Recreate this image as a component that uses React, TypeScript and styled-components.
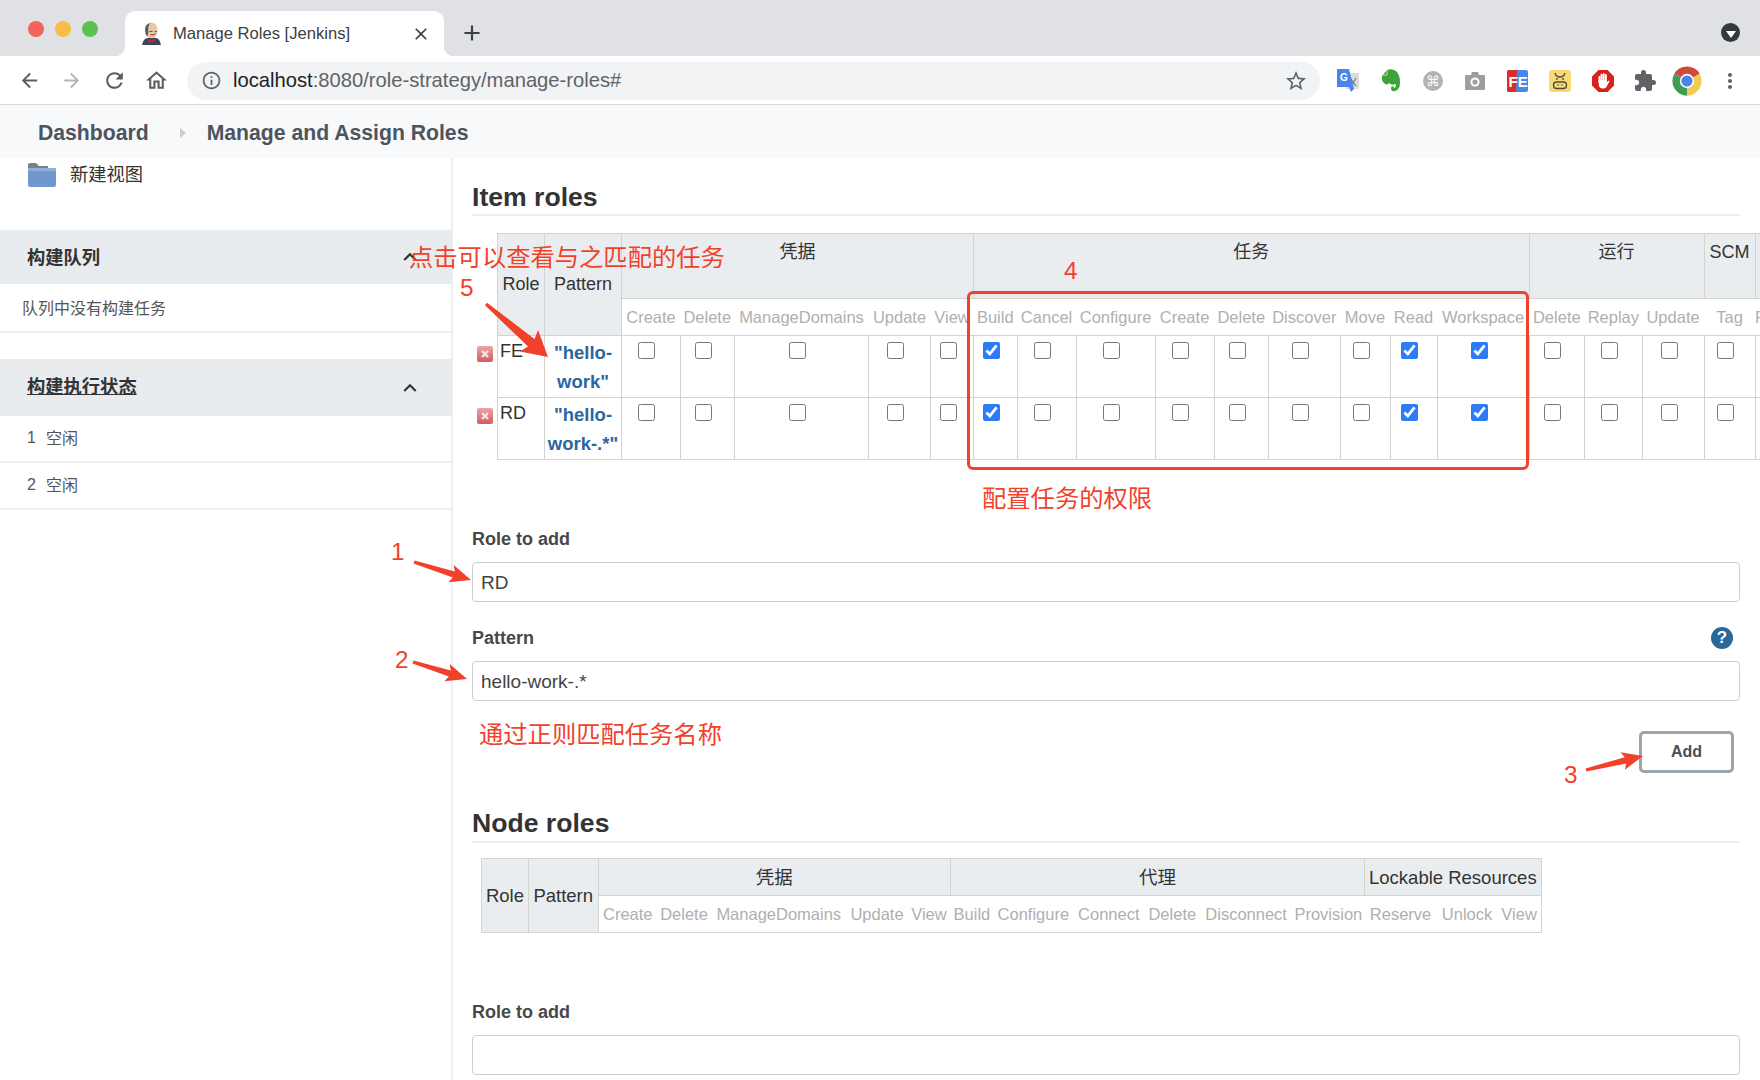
import styled, { createGlobalStyle } from "styled-components";
import {
    MdAdd,
    MdArrowBack,
    MdArrowForward,
    MdClose,
    MdExtension,
    MdInfoOutline,
    MdKeyboardArrowUp,
    MdMoreVert,
    MdOutlineHome,
    MdRefresh,
    MdStarBorder,
} from "react-icons/md";

const FONT = `"Liberation Sans", "Noto Sans CJK SC", sans-serif`;
const RED = "#f2412b";
const LINE = "#d3d3cf";

const GlobalStyle = createGlobalStyle`
    html, body {
        margin: 0;
        padding: 0;
        background: #fff;
        overflow: hidden;
    }
    * {
        box-sizing: border-box;
    }
`;

const Page = styled.div`
    position: relative;
    width: 1760px;
    height: 1080px;
    overflow: hidden;
    font-family: ${FONT};
    color: #333;
    background: #fff;
`;

// browser chrome
const TabStrip = styled.div`
    display: flex;
    align-items: flex-end;
    height: 56px;
    padding-right: 20px;
    background: #dfe1e5;
`;

const Lights = styled.div`
    display: flex;
    gap: 11px;
    align-self: flex-start;
    margin: 21px 0 0 28px;
`;

const Light = styled.span<{ $color: string }>`
    width: 16px;
    height: 16px;
    border-radius: 50%;
    background: ${(p) => p.$color};
`;

const Tab = styled.div`
    position: relative;
    display: flex;
    align-items: center;
    gap: 11px;
    width: 319px;
    height: 45px;
    margin-left: 27px;
    padding: 0 13px 0 16px;
    background: #fff;
    border-radius: 10px 10px 0 0;
    &::before,
    &::after {
        content: "";
        position: absolute;
        bottom: 0;
        width: 10px;
        height: 10px;
    }
    &::before {
        left: -10px;
        background: radial-gradient(circle at 0 0, transparent 10px, #fff 10.5px);
    }
    &::after {
        right: -10px;
        background: radial-gradient(circle at 100% 0, transparent 10px, #fff 10.5px);
    }
`;

const TabTitle = styled.span`
    flex: 1;
    font-size: 16.6px;
    color: #3c4043;
    white-space: nowrap;
`;

const NewTab = styled.div`
    display: flex;
    align-self: flex-start;
    margin: 20px 0 0 15px;
    color: #3c4043;
`;

const TabSearch = styled.div`
    display: flex;
    align-items: center;
    justify-content: center;
    align-self: flex-start;
    width: 19px;
    height: 19px;
    margin: 23px 0 0 auto;
    border-radius: 50%;
    background: #35383c;
    &::after {
        content: "";
        margin-top: 3px;
        border-left: 5px solid transparent;
        border-right: 5px solid transparent;
        border-top: 7px solid #fff;
    }
`;

const Toolbar = styled.div`
    display: flex;
    align-items: center;
    height: 49px;
    padding: 1px 0 0 8px;
    background: #fff;
    border-bottom: 1px solid #d9dadd;
`;

const NavButton = styled.div<{ $dim?: boolean }>`
    display: flex;
    align-items: center;
    justify-content: center;
    width: 42.5px;
    color: ${(p) => (p.$dim ? "#b4b6b9" : "#5a5d61")};
`;

const Omnibox = styled.div`
    display: flex;
    align-items: center;
    width: 1133px;
    height: 38px;
    margin: 0 7px 0 9px;
    padding: 0 12px 0 14px;
    border-radius: 19px;
    background: #f1f3f4;
    color: #5f6368;
`;

const Url = styled.div`
    flex: 1;
    margin-left: 11px;
    font-size: 20.2px;
    color: #5f6368;
`;

const UrlHost = styled.span`
    color: #202124;
`;

const ExtButton = styled.div`
    display: flex;
    align-items: center;
    justify-content: center;
    width: 42.4px;
    color: #5f6368;
`;

const Breadcrumb = styled.div`
    display: flex;
    align-items: center;
    height: 53px;
    padding: 2px 0 0 38px;
    background: #f8f9fa;
    font-size: 21.2px;
    font-weight: bold;
    color: #4d545d;
`;

const Crumb = styled.span`
    white-space: nowrap;
`;

const CrumbArrow = styled.span`
    margin: 0 21px 0 31px;
    border-top: 5px solid transparent;
    border-bottom: 5px solid transparent;
    border-left: 6px solid #c9cbcd;
`;

// jenkins page
const Body = styled.div`
    display: flex;
    height: 922px;
`;

const Sidebar = styled.aside`
    flex: none;
    width: 453px;
    border-right: 2px solid #eceef1;
`;

const FolderRow = styled.div`
    display: flex;
    align-items: flex-start;
    gap: 14px;
    height: 72px;
    padding: 5px 0 0 28px;
    font-size: 18.3px;
    line-height: 24px;
    color: #333;
`;

const SectionHead = styled.div<{ $height: number; $gap?: number }>`
    display: flex;
    align-items: center;
    justify-content: space-between;
    height: ${(p) => p.$height}px;
    margin-top: ${(p) => p.$gap ?? 0}px;
    padding: 0 28px 0 27px;
    background: #e9ecef;
    font-size: 18.3px;
    font-weight: bold;
    color: #333;
`;

const SectionLabel = styled.span<{ $lift: number; $link?: boolean }>`
    margin-bottom: ${(p) => p.$lift}px;
    text-decoration: ${(p) => (p.$link ? "underline" : "none")};
`;

const SideRow = styled.div<{ $inset: number; $height: number; $lift: number }>`
    display: flex;
    align-items: center;
    gap: 10px;
    height: ${(p) => p.$height}px;
    padding: 0 0 ${(p) => p.$lift}px ${(p) => p.$inset}px;
    border-bottom: 2px solid #eef0f2;
    font-size: 16px;
    color: #555;
`;

const RowIndex = styled.span`
    padding-top: 2px;
`;

const Main = styled.main`
    flex: 1;
    min-width: 0;
    padding: 20px 20px 0 19px;
`;

const SectionTitle = styled.h2<{ $gap?: number; $line: number }>`
    margin: ${(p) => p.$gap ?? 0}px 0 0;
    height: 38px;
    border-bottom: 2px solid #eceeef;
    font-size: 26.6px;
    line-height: ${(p) => p.$line}px;
    font-weight: bold;
    color: #333;
`;

const ItemWrap = styled.div`
    margin: 17px 0 0 4.5px;
`;

const NodeWrap = styled.div`
    margin: 15px 0 0 9px;
`;

const RoleTable = styled.table<{ $width: number; $outlined?: boolean }>`
    width: ${(p) => p.$width}px;
    table-layout: fixed;
    border-collapse: collapse;
    ${(p) => (p.$outlined ? `border: 1px solid ${LINE};` : "")}
`;

const GroupHead = styled.th<{ $tall?: boolean; $big?: boolean }>`
    height: ${(p) => (p.$tall ? 65 : 37)}px;
    padding: ${(p) => (p.$tall ? "4px 0 0" : "0")};
    vertical-align: ${(p) => (p.$tall ? "top" : "middle")};
    border: 1px solid ${LINE};
    background: #e9edf0;
    font-size: ${(p) => (p.$big ? 18.5 : 18)}px;
    line-height: 29px;
    font-weight: normal;
    color: #333;
    white-space: nowrap;
`;

const SideHead = styled.th<{ $big?: boolean }>`
    padding: 0;
    border: 1px solid ${LINE};
    background: #e9edf0;
    font-size: ${(p) => (p.$big ? 18.5 : 18)}px;
    font-weight: normal;
    color: #333;
`;

const BlankHead = styled.th`
    padding: 0;
    border: none;
    background: #fff;
`;

const PermHead = styled.th`
    height: 37px;
    padding: 0;
    border-top: 1px solid ${LINE};
    border-bottom: 1px solid ${LINE};
    background: #fff;
    font-size: 16.5px;
    font-weight: normal;
    color: #afafaf;
    text-align: center;
    white-space: nowrap;
`;

const RemoveCell = styled.td`
    padding: 10px 0 0;
    border: none;
    vertical-align: top;
    line-height: 0;
`;

const RoleCell = styled.td`
    height: 62px;
    padding: 1px 0 0 2px;
    border: 1px solid ${LINE};
    vertical-align: top;
    font-size: 18px;
    line-height: 29px;
    color: #333;
`;

const PatternCell = styled.td`
    padding: 2px 0 0;
    border: 1px solid ${LINE};
    vertical-align: top;
    text-align: center;
    font-size: 18.5px;
    line-height: 29px;
    font-weight: bold;
    color: #2c669f;
`;

const PermCell = styled.td`
    padding: 6px 0 0;
    border: 1px solid ${LINE};
    vertical-align: top;
    text-align: center;
    line-height: 0;
`;

const PermBox = styled.input`
    width: 17px;
    height: 17px;
    margin: 0 8px 0 0;
    accent-color: #2b7cf6;
`;

const FieldLabel = styled.div<{ $gap: number }>`
    display: flex;
    align-items: center;
    justify-content: space-between;
    height: 24px;
    margin-top: ${(p) => p.$gap}px;
    padding-right: 7px;
    font-size: 18px;
    font-weight: bold;
    color: #484848;
`;

const TextField = styled.input`
    display: block;
    width: 100%;
    height: 40px;
    margin-top: 11px;
    padding: 1px 8px 0;
    border: 1.5px solid #cbcdcf;
    border-radius: 4px;
    background: #fff;
    font-family: ${FONT};
    font-size: 19px;
    color: #444;
    outline: none;
`;

const HelpBadge = styled.span`
    display: flex;
    align-items: center;
    justify-content: center;
    width: 22px;
    height: 22px;
    border-radius: 50%;
    background: #2a6698;
    font-size: 17px;
    font-weight: bold;
    color: #fff;
`;

const AddRow = styled.div`
    display: flex;
    justify-content: flex-end;
    margin-top: 30px;
    padding-right: 6px;
`;

const AddButton = styled.button`
    width: 95px;
    height: 42px;
    border: 3px solid #9aa5af;
    border-radius: 5px;
    background: #fff;
    font-family: ${FONT};
    font-size: 16px;
    font-weight: bold;
    color: #4a4f57;
`;

// red annotations drawn over the screenshot
const Note = styled.div<{ $left: number; $top: number }>`
    position: absolute;
    left: ${(p) => p.$left}px;
    top: ${(p) => p.$top}px;
    font-size: 24.3px;
    line-height: 24px;
    color: ${RED};
    white-space: nowrap;
`;

const HighlightBox = styled.div`
    position: absolute;
    left: 967px;
    top: 291px;
    width: 562px;
    height: 179px;
    border: 3px solid ${RED};
    border-radius: 6px;
`;

const ArrowLayer = styled.svg`
    position: absolute;
    left: 0;
    top: 0;
    pointer-events: none;
`;

type ArrowSpec = { from: [number, number]; to: [number, number]; head: number; wing: number; shaft: number };

const ARROWS: ArrowSpec[] = [
    { from: [486, 304], to: [548, 357], head: 22, wing: 14, shaft: 5 },
    { from: [414, 562], to: [471, 580], head: 18, wing: 9, shaft: 3.2 },
    { from: [413, 662], to: [467, 679], head: 18, wing: 9, shaft: 3.2 },
    { from: [1586, 770], to: [1643, 756], head: 18, wing: 9, shaft: 3.2 },
];

function arrowPoints({ from, to, head, wing, shaft }: ArrowSpec) {
    const len = Math.hypot(to[0] - from[0], to[1] - from[1]);
    const ux = (to[0] - from[0]) / len;
    const uy = (to[1] - from[1]) / len;
    const at = (along: number, side: number) =>
        `${(from[0] + ux * along - uy * side).toFixed(1)},${(from[1] + uy * along + ux * side).toFixed(1)}`;
    return [
        at(0, -1.6),
        at(len - head, -shaft),
        at(len - head - 3, -wing),
        at(len, 0),
        at(len - head - 3, wing),
        at(len - head, shaft),
        at(0, 1.6),
    ].join(" ");
}

function FolderIcon() {
    return (
        <svg width="28" height="24" viewBox="0 0 28 24">
            <path d="M0 2 Q0 0 2 0 H8 L11 3 H20 V8 H0Z" fill="#7c7f84" />
            <rect x="0" y="5" width="28" height="19" rx="2" fill="#6f98cf" />
            <rect x="0" y="5" width="28" height="3" fill="#8fb0dc" />
        </svg>
    );
}

function JenkinsFavicon() {
    return (
        <svg width="21" height="23" viewBox="0 0 20 22">
            <path d="M1 22 Q2 15 8 15 H13 Q18 15 19 22Z" fill="#35465c" />
            <ellipse cx="10" cy="8" rx="6" ry="7.5" fill="#e9c6a6" />
            <path d="M4 9 Q3 2 9 1 Q6 4 7 10 L6 14 Q4 12 4 9Z" fill="#5b5b5b" />
            <path d="M8 9 H11 M13 9 H15 M9 12 Q12 13 14 11" stroke="#7b4a32" strokeWidth="1" fill="none" />
            <path d="M7 16 L10 17.5 L13 16 V20 L10 18.5 L7 20Z" fill="#c8282c" />
        </svg>
    );
}

function RemoveIcon() {
    return (
        <svg width="16" height="16" viewBox="0 0 16 16">
            <defs>
                <linearGradient id="removeFill" x1="0" y1="0" x2="0" y2="1">
                    <stop offset="0" stopColor="#eaa6a6" />
                    <stop offset="1" stopColor="#d45c5c" />
                </linearGradient>
            </defs>
            <rect width="16" height="16" rx="2" fill="url(#removeFill)" />
            <path d="M5 5 L11 11 M11 5 L5 11" stroke="#f6e4e4" strokeWidth="2.4" />
        </svg>
    );
}

function TranslateIcon() {
    return (
        <svg width="22" height="23" viewBox="0 0 22 23">
            <rect x="9" y="4" width="13" height="16" fill="#dcdcdc" />
            <path d="M13 9 L19 17 M19 9 L14 17" stroke="#70757a" strokeWidth="1.2" />
            <path d="M0 0 H12 L17 20 L14 23 L12 18 H0Z" fill="#4a85ec" />
            <text x="3" y="12" fontSize="10" fontWeight="bold" fill="#fff" fontFamily="Liberation Sans">
                G
            </text>
        </svg>
    );
}

function EvernoteIcon() {
    return (
        <svg width="20" height="23" viewBox="0 0 20 23">
            <path
                d="M6 1 Q11 -1 15 2 Q19 6 19 13 Q19 21 14 22 Q10 23 10 19 Q10 17 12 17 L13 19 Q15 19 15 15 Q11 17 8 14 Q6 17 3 14 Q0 11 1 7 L6 1Z"
                fill="#3da33a"
            />
            <path d="M6 1 V6 H1" fill="none" stroke="#d7efd6" strokeWidth="0.8" />
        </svg>
    );
}

function CommandIcon() {
    return (
        <svg width="20" height="20" viewBox="0 0 20 20">
            <circle cx="10" cy="10" r="10" fill="#b3b3b3" />
            <text x="10" y="15" fontSize="14" fill="#fff" textAnchor="middle" fontFamily="DejaVu Sans">
                ⌘
            </text>
        </svg>
    );
}

function CameraIcon() {
    return (
        <svg width="20" height="18" viewBox="0 0 20 18">
            <path d="M1 3 H6 L7 0 H13 L14 3 H19 Q20 3 20 4 V17 Q20 18 19 18 H1 Q0 18 0 17 V4 Q0 3 1 3Z" fill="#9e9e9e" />
            <circle cx="10" cy="10" r="4.6" fill="#fff" />
            <circle cx="10" cy="10" r="2.6" fill="#9e9e9e" />
        </svg>
    );
}

function FeIcon() {
    return (
        <svg width="21" height="22" viewBox="0 0 21 22">
            <rect width="21" height="22" rx="2" fill="#4a85ec" />
            <path d="M2 0 H10 L9 22 H2 Q0 22 0 20 V2 Q0 0 2 0Z" fill="#dd2c26" />
            <text x="1.5" y="17" fontSize="15" fontWeight="bold" fill="#fff" fontFamily="Liberation Sans">
                FE
            </text>
        </svg>
    );
}

function CowIcon() {
    return (
        <svg width="22" height="22" viewBox="0 0 22 22">
            <rect width="22" height="22" rx="3" fill="#f8d873" />
            <path d="M6 3 Q7 7 11 7 Q15 7 16 3" fill="none" stroke="#4d4a40" strokeWidth="1.3" />
            <path d="M8 8 V10 M14 8 V10" stroke="#4d4a40" strokeWidth="1.3" />
            <rect x="4.5" y="12" width="13" height="6.5" rx="3" fill="none" stroke="#4d4a40" strokeWidth="1.3" />
            <path d="M8.5 15 H9.5 M12.5 15 H13.5" stroke="#4d4a40" strokeWidth="1.5" />
        </svg>
    );
}

function StopHandIcon() {
    return (
        <svg width="22" height="22" viewBox="0 0 22 22">
            <path d="M6.5 0 H15.5 L22 6.5 V15.5 L15.5 22 H6.5 L0 15.5 V6.5Z" fill="#d8211b" />
            <path d="M7.4 7 V12 M9.5 4.6 V11 M11.7 4 V11 M13.9 5 V12" stroke="#fff" strokeWidth="1.9" strokeLinecap="round" />
            <path d="M6.5 10 H14.8 V12.6 L16.6 10.6 Q17.8 10.8 17.2 12 L14.4 17 Q13.6 18.4 12 18.4 H10 Q7.6 18.4 7 16Z" fill="#fff" />
        </svg>
    );
}

function ChromeIcon() {
    return (
        <svg width="32" height="32" viewBox="0 0 24 24">
            <path d="M12 12 L2.5 6.5 A11 11 0 0 1 21.5 6.5Z" fill="#cf4a3c" />
            <path d="M12 12 L21.5 6.5 A11 11 0 0 1 12 23Z" fill="#f4cb52" />
            <path d="M12 12 L12 23 A11 11 0 0 1 2.5 6.5Z" fill="#3f9d55" />
            <circle cx="12" cy="12" r="5.4" fill="#fff" />
            <circle cx="12" cy="12" r="4.2" fill="#4a85ec" />
        </svg>
    );
}

const ITEM_GROUPS = [
    { label: "凭据", perms: ["Create", "Delete", "ManageDomains", "Update", "View"], widths: [58.5, 54.5, 134, 62, 43] },
    {
        label: "任务",
        perms: ["Build", "Cancel", "Configure", "Create", "Delete", "Discover", "Move", "Read", "Workspace"],
        widths: [43.5, 59, 79, 59, 54.5, 71.5, 50, 47, 92],
    },
    { label: "运行", perms: ["Delete", "Replay", "Update"], widths: [55.5, 57.5, 62] },
    { label: "SCM", perms: ["Tag"], widths: [51] },
    { label: "", perms: ["Reserve"], widths: [60] },
];

const NODE_GROUPS = [
    { label: "凭据", perms: ["Create", "Delete", "ManageDomains", "Update", "View"], widths: [59, 54, 135.5, 61, 42.8] },
    {
        label: "代理",
        perms: ["Build", "Configure", "Connect", "Delete", "Disconnect", "Provision"],
        widths: [43.2, 79.6, 71.4, 55.6, 92, 72.4],
    },
    { label: "Lockable Resources", perms: ["Reserve", "Unlock", "View"], widths: [72, 61, 43.6] },
];

const ITEM_ROWS = [
    { role: "FE", pattern: ['"hello-', 'work"'] },
    { role: "RD", pattern: ['"hello-', 'work-.*"'] },
];

const CHECKED = ["Build", "Read", "Workspace"];

const sum = (values: number[]) => values.reduce((a, b) => a + b, 0);

function ItemRolesTable() {
    const widths = [21, 47, 77, ...ITEM_GROUPS.flatMap((g) => g.widths)];
    return (
        <RoleTable $width={sum(widths)}>
            <colgroup>
                {widths.map((w, i) => (
                    <col key={i} width={w} />
                ))}
            </colgroup>
            <thead>
                <tr>
                    <BlankHead rowSpan={2} />
                    <SideHead rowSpan={2}>Role</SideHead>
                    <SideHead rowSpan={2}>Pattern</SideHead>
                    {ITEM_GROUPS.map((g) => (
                        <GroupHead key={g.label} colSpan={g.perms.length} $tall>
                            {g.label}
                        </GroupHead>
                    ))}
                </tr>
                <tr>
                    {ITEM_GROUPS.flatMap((g) =>
                        g.perms.map((p) => <PermHead key={g.label + p}>{p}</PermHead>)
                    )}
                </tr>
            </thead>
            <tbody>
                {ITEM_ROWS.map((row) => (
                    <tr key={row.role}>
                        <RemoveCell>
                            <RemoveIcon />
                        </RemoveCell>
                        <RoleCell>{row.role}</RoleCell>
                        <PatternCell>
                            {row.pattern[0]}
                            <br />
                            {row.pattern[1]}
                        </PatternCell>
                        {ITEM_GROUPS.flatMap((g) =>
                            g.perms.map((p) => (
                                <PermCell key={g.label + p}>
                                    <PermBox
                                        type="checkbox"
                                        readOnly
                                        checked={g.label === "任务" && CHECKED.includes(p)}
                                    />
                                </PermCell>
                            ))
                        )}
                    </tr>
                ))}
            </tbody>
        </RoleTable>
    );
}

function NodeRolesTable() {
    const widths = [47, 69.5, ...NODE_GROUPS.flatMap((g) => g.widths)];
    return (
        <RoleTable $width={sum(widths)} $outlined>
            <colgroup>
                {widths.map((w, i) => (
                    <col key={i} width={w} />
                ))}
            </colgroup>
            <thead>
                <tr>
                    <SideHead rowSpan={2} $big>
                        Role
                    </SideHead>
                    <SideHead rowSpan={2} $big>
                        Pattern
                    </SideHead>
                    {NODE_GROUPS.map((g) => (
                        <GroupHead key={g.label} colSpan={g.perms.length} $big>
                            {g.label}
                        </GroupHead>
                    ))}
                </tr>
                <tr>
                    {NODE_GROUPS.flatMap((g) =>
                        g.perms.map((p) => <PermHead key={g.label + p}>{p}</PermHead>)
                    )}
                </tr>
            </thead>
        </RoleTable>
    );
}

export default function App() {
    return (
        <Page>
            <GlobalStyle />
            <TabStrip>
                <Lights>
                    <Light $color="#f2645a" />
                    <Light $color="#f7bd45" />
                    <Light $color="#5cc24f" />
                </Lights>
                <Tab>
                    <JenkinsFavicon />
                    <TabTitle>Manage Roles [Jenkins]</TabTitle>
                    <MdClose size={20} color="#3c4043" />
                </Tab>
                <NewTab>
                    <MdAdd size={26} />
                </NewTab>
                <TabSearch />
            </TabStrip>
            <Toolbar>
                <NavButton>
                    <MdArrowBack size={23} />
                </NavButton>
                <NavButton $dim>
                    <MdArrowForward size={23} />
                </NavButton>
                <NavButton>
                    <MdRefresh size={25} />
                </NavButton>
                <NavButton>
                    <MdOutlineHome size={25} />
                </NavButton>
                <Omnibox>
                    <MdInfoOutline size={21} />
                    <Url>
                        <UrlHost>localhost</UrlHost>:8080/role-strategy/manage-roles#
                    </Url>
                    <MdStarBorder size={24} />
                </Omnibox>
                <ExtButton>
                    <TranslateIcon />
                </ExtButton>
                <ExtButton>
                    <EvernoteIcon />
                </ExtButton>
                <ExtButton>
                    <CommandIcon />
                </ExtButton>
                <ExtButton>
                    <CameraIcon />
                </ExtButton>
                <ExtButton>
                    <FeIcon />
                </ExtButton>
                <ExtButton>
                    <CowIcon />
                </ExtButton>
                <ExtButton>
                    <StopHandIcon />
                </ExtButton>
                <ExtButton>
                    <MdExtension size={24} />
                </ExtButton>
                <ExtButton>
                    <ChromeIcon />
                </ExtButton>
                <ExtButton>
                    <MdMoreVert size={24} />
                </ExtButton>
            </Toolbar>
            <Breadcrumb>
                <Crumb>Dashboard</Crumb>
                <CrumbArrow />
                <Crumb>Manage and Assign Roles</Crumb>
            </Breadcrumb>
            <Body>
                <Sidebar>
                    <FolderRow>
                        <FolderIcon />
                        新建视图
                    </FolderRow>
                    <SectionHead $height={54}>
                        <SectionLabel $lift={2}>构建队列</SectionLabel>
                        <MdKeyboardArrowUp size={26} color="#333" />
                    </SectionHead>
                    <SideRow $inset={22} $height={49} $lift={2}>
                        队列中没有构建任务
                    </SideRow>
                    <SectionHead $height={57} $gap={26}>
                        <SectionLabel $lift={6} $link>
                            构建执行状态
                        </SectionLabel>
                        <MdKeyboardArrowUp size={26} color="#333" />
                    </SectionHead>
                    <SideRow $inset={27} $height={47} $lift={4}>
                        <RowIndex>1</RowIndex>
                        <span>空闲</span>
                    </SideRow>
                    <SideRow $inset={27} $height={47} $lift={4}>
                        <RowIndex>2</RowIndex>
                        <span>空闲</span>
                    </SideRow>
                </Sidebar>
                <Main>
                    <SectionTitle $line={38}>Item roles</SectionTitle>
                    <ItemWrap>
                        <ItemRolesTable />
                    </ItemWrap>
                    <FieldLabel $gap={67}>Role to add</FieldLabel>
                    <TextField readOnly value="RD" />
                    <FieldLabel $gap={24}>
                        Pattern
                        <HelpBadge>?</HelpBadge>
                    </FieldLabel>
                    <TextField readOnly value="hello-work-.*" />
                    <AddRow>
                        <AddButton>Add</AddButton>
                    </AddRow>
                    <SectionTitle $gap={32} $line={36}>
                        Node roles
                    </SectionTitle>
                    <NodeWrap>
                        <NodeRolesTable />
                    </NodeWrap>
                    <FieldLabel $gap={67}>Role to add</FieldLabel>
                    <TextField readOnly value="" />
                </Main>
            </Body>

            <HighlightBox />
            <Note $left={409} $top={246}>点击可以查看与之匹配的任务</Note>
            <Note $left={460} $top={276}>5</Note>
            <Note $left={1064} $top={259}>4</Note>
            <Note $left={982} $top={487}>配置任务的权限</Note>
            <Note $left={391} $top={540}>1</Note>
            <Note $left={395} $top={648}>2</Note>
            <Note $left={479} $top={723}>通过正则匹配任务名称</Note>
            <Note $left={1564} $top={763}>3</Note>
            <ArrowLayer width="1760" height="1080" viewBox="0 0 1760 1080">
                {ARROWS.map((a, i) => (
                    <polygon key={i} points={arrowPoints(a)} fill={RED} />
                ))}
            </ArrowLayer>
        </Page>
    );
}
